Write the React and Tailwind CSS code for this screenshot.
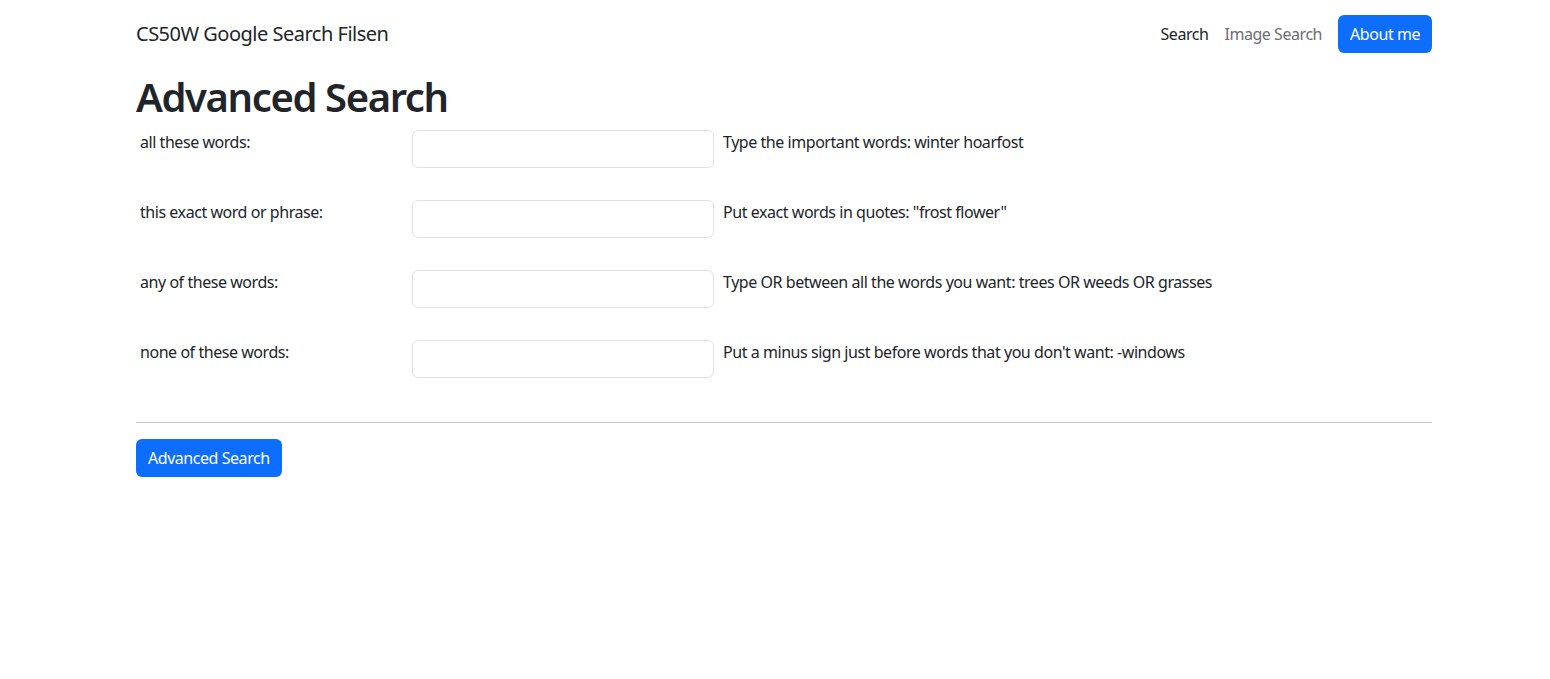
import React from "react";

const rows = [
  { label: "all these words:", name: "as_q", hint: "Type the important words: winter hoarfost" },
  { label: "this exact word or phrase:", name: "as_epq", hint: 'Put exact words in quotes: "frost flower"' },
  { label: "any of these words:", name: "as_oq", hint: "Type OR between all the words you want: trees OR weeds OR grasses" },
  { label: "none of these words:", name: "as_eq", hint: "Put a minus sign just before words that you don't want: -windows" },
];

const App = () => {
  return (
    <div className="min-h-[679px] bg-white text-[#212529] font-['Noto_Sans',sans-serif] text-base tracking-[-0.45px]">
      <div className="ml-[136px] w-[1296px]">
        {/* Navbar */}
        <nav className="flex items-center justify-between pt-[15px]">
          <a href="#" className="text-[20px] leading-[38px] tracking-[-0.5px] text-[#212529]">
            CS50W Google Search Filsen
          </a>
          <div className="flex items-center">
            <a href="#" className="px-2 leading-6 text-[#212529]">Search</a>
            <a href="#" className="px-2 leading-6 text-[#6c6e71]">Image Search</a>
            <button className="ml-2 h-[38px] rounded-md bg-[#0d6efd] px-3 leading-6 text-white">
              About me
            </button>
          </div>
        </nav>

        <h1 className="mt-5 mb-[9px] text-[40px] font-semibold leading-[48px] tracking-[-1.4px]">Advanced Search</h1>

        <form>
          <div className="flex flex-col gap-8">
            {rows.map((row) => (
              <div key={row.name} className="flex items-start">
                <label className="w-[276px] pl-1 leading-6">{row.label}</label>
                <input
                  type="text"
                  name={row.name}
                  className="h-[38px] w-[302px] rounded-md border border-[#dee2e6] bg-white px-3 outline-none"
                />
                <span className="pl-[9px] leading-6">{row.hint}</span>
              </div>
            ))}
          </div>

          <hr className="mt-[44px] mb-4 border-0 border-t border-[#c8c8c8]" />

          <button
            type="submit"
            className="h-[38px] rounded-md bg-[#0d6efd] px-3 leading-6 text-white"
          >
            Advanced Search
          </button>
        </form>
      </div>
    </div>
  );
};

export default App;
